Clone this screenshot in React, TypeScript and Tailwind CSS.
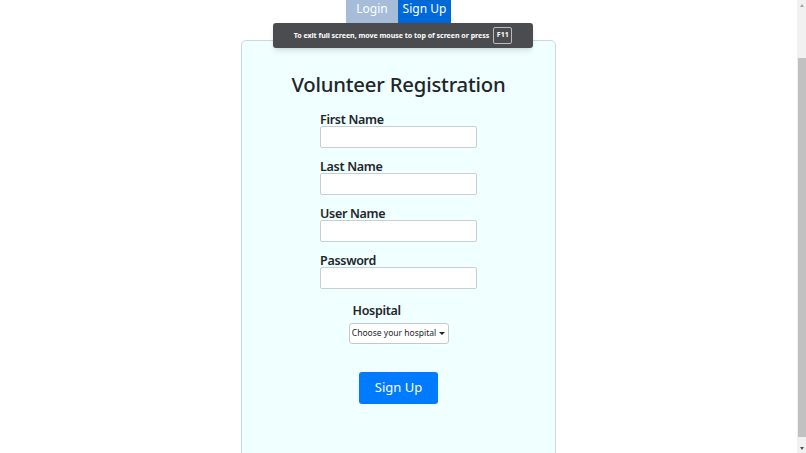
import { useState } from 'react';

const fields = ['First Name', 'Last Name', 'User Name', 'Password'];

function Field({ label }: { label: string }) {
  return (
    <div className="flex flex-col">
      <label className="text-[12.5px] leading-[15px] font-semibold text-[#212529] h-[14px] tracking-[-0.3px]">{label}</label>
      <input
        type={label === 'Password' ? 'password' : 'text'}
        className="w-[157px] h-[22px] bg-white border border-[#c9ced3] rounded-[2px] outline-none"
      />
    </div>
  );
}

export default function App() {
  const [tab, setTab] = useState<'login' | 'signup'>('signup');

  return (
    <div className="h-[453px] w-[806px] flex overflow-hidden bg-white" style={{ fontFamily: '"Noto Sans", "Open Sans", sans-serif' }}>
      <div className="relative flex-1 flex flex-col items-center overflow-hidden">
        {/* tabs */}
        <div className="flex h-[23px] flex-none">
          <button
            onClick={() => setTab('login')}
            className="w-[52px] bg-[#a6bcd9] text-white text-[12px] leading-[16px] pb-[5px]"
          >
            Login
          </button>
          <button
            onClick={() => setTab('signup')}
            className={`w-[53px] text-white text-[12px] leading-[16px] pb-[5px] ${
              tab === 'signup' ? 'bg-[#0069d9]' : 'bg-[#0069d9]'
            }`}
          >
            Sign Up
          </button>
        </div>

        {/* card */}
        <div className="mt-[17px] w-[315px] h-[440px] flex-none bg-[#f0ffff] border border-[#cfd6dc] rounded-[5px] flex flex-col items-center">
          <h1 className="mt-[28px] text-[20.3px] leading-[30px] text-[#212529] font-medium tracking-[-0.2px]">
            Volunteer Registration
          </h1>
          <div className="mt-[13px] flex flex-col gap-[11px]">
            {fields.map((f) => (
              <Field key={f} label={f} />
            ))}
          </div>
          <div className="mt-[14px] flex flex-col">
            <span className="ml-[4px] text-[12.5px] leading-[16px] font-semibold text-[#212529] tracking-[-0.3px]">Hospital</span>
            <button className="mt-[4px] w-[100px] h-[21px] bg-white border border-[#c3c8cd] rounded-[3px] flex items-center justify-center gap-[3px] text-[8.5px] whitespace-nowrap text-[#212529]">
              Choose your hospital
              <span className="w-0 h-0 border-l-[3px] border-r-[3px] border-t-[3px] border-l-transparent border-r-transparent border-t-[#212529]" />
            </button>
          </div>
          <button className="mt-[28px] w-[79px] h-[32px] bg-[#007bff] rounded-[3px] text-white text-[13px]">
            Sign Up
          </button>
        </div>

        {/* fullscreen notice */}
        <div className="absolute left-[273px] top-[23px] w-[260px] h-[25px] bg-[#4a4c50] rounded-[3px] shadow-md flex items-center justify-center gap-[4px]">
          <span className="text-white text-[7.1px] font-bold tracking-[-0.05px]">To exit full screen, move mouse to top of screen or press</span>
          <span className="w-[19px] h-[17px] flex items-center justify-center border border-[#b9bbbe] rounded-[2px] text-white text-[7px] font-bold">F11</span>
        </div>
      </div>

      {/* scrollbar */}
      <div className="w-[9px] bg-[#f1f1f1] flex flex-col items-center">
        <div className="h-[10px] flex items-center justify-center">
          <span className="w-0 h-0 border-l-[2px] border-r-[2px] border-b-[3px] border-l-transparent border-r-transparent border-b-[#a3a3a3]" />
        </div>
        <div className="mt-[48px] w-[8px] h-[379px] bg-[#c1c1c1]" />
        <div className="flex-1" />
        <div className="h-[10px] flex items-center justify-center">
          <span className="w-0 h-0 border-l-[2px] border-r-[2px] border-t-[3px] border-l-transparent border-r-transparent border-t-[#505050]" />
        </div>
      </div>
    </div>
  );
}
